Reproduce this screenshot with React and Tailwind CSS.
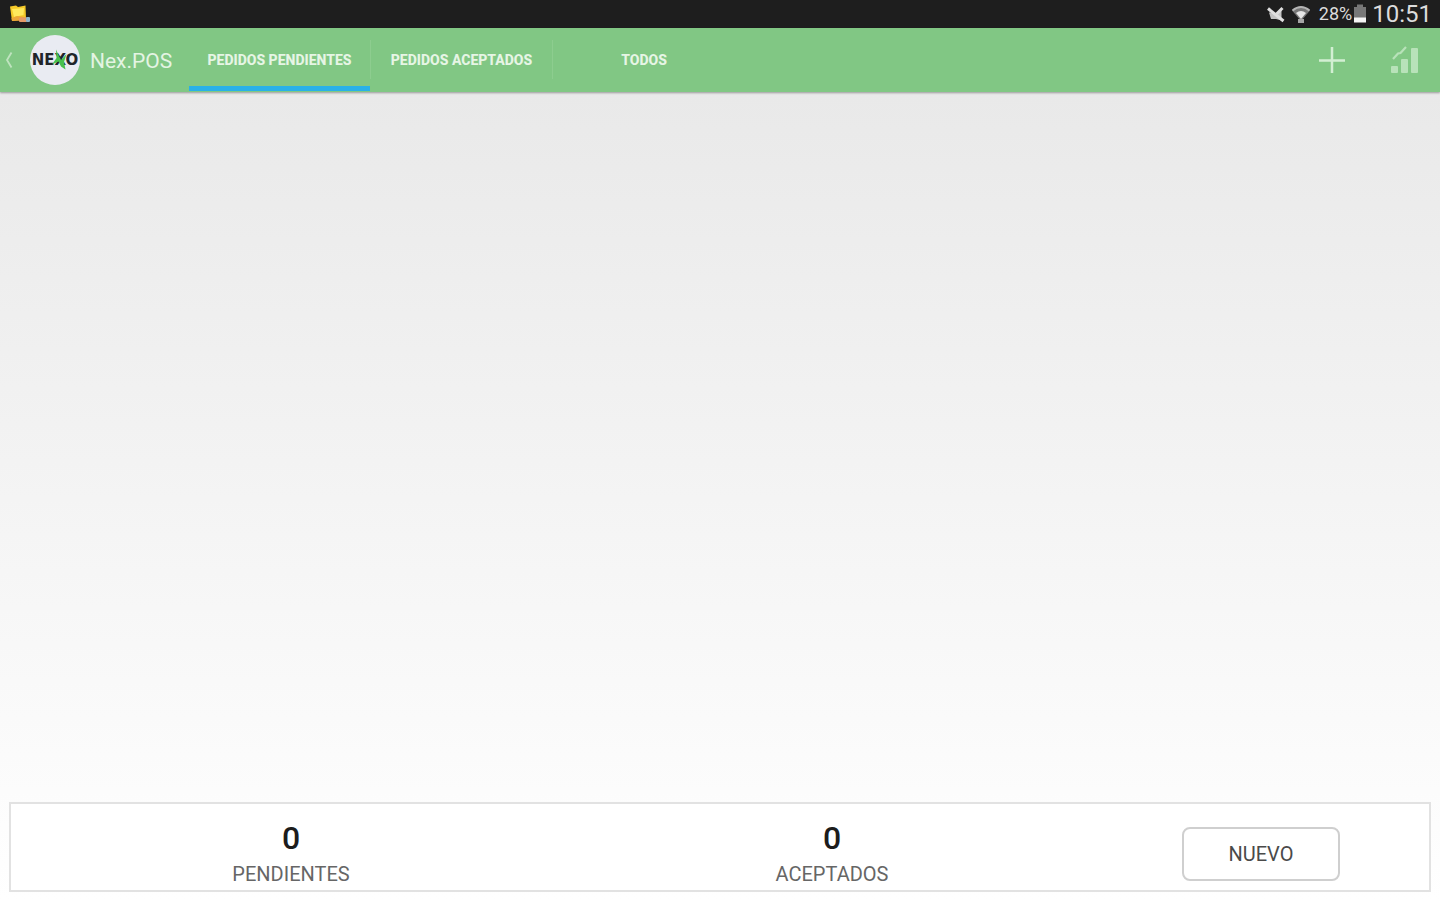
import { useState } from "react";

const TABS = ["PEDIDOS PENDIENTES", "PEDIDOS ACEPTADOS", "TODOS"];

function FolderIcon() {
  return (
    <svg className="h-5 w-6" viewBox="0 0 24 20" aria-hidden="true">
      <path d="M2 2.500 L8 1.500 L10 3 L17.500 1.500 L18 15 L4 17 Z" fill="#f5c928" />
      <path d="M4 5 L16 4 L15.500 11 L6 13 Z" fill="#ffe95c" />
      <path d="M3.500 14 L9 12 L17 13 L18 16.500 L4 17 Z" fill="#eda637" />
      <rect x="11" y="13.500" width="8" height="4.500" rx="1" fill="#e59a68" />
      <rect x="18" y="13" width="4" height="5" rx="1" fill="#8eb4cc" />
    </svg>
  );
}

function MutedIcon() {
  return (
    <svg className="h-5 w-5" viewBox="0 0 20 20" aria-hidden="true">
      <path d="M2 8.500 H6 L9 9.500 L14.500 4 V16.500 L9 15 H4 Z" fill="#c4c4c4" />
      <path d="M1 4.500 L16.500 17" stroke="#e0e0e0" strokeWidth="3" />
      <path d="M9.500 10 L15.500 4" stroke="#dedede" strokeWidth="3" />
    </svg>
  );
}

function WifiIcon() {
  return (
    <svg className="h-5 w-5" viewBox="0 0 20 20" aria-hidden="true">
      <path d="M1 6.500 Q10 -1 19 6.500 L10 17 Z" fill="#777777" />
      <path d="M1.500 6.500 Q10 -0.500 18.500 6.500" fill="none" stroke="#b5b5b5" strokeWidth="2" />
      <path d="M5 9 Q10 5 15 9 L10 15 Z" fill="#e6e6e6" />
      <rect x="7" y="15" width="6" height="4" fill="#a5a5a5" />
    </svg>
  );
}

function BatteryIcon() {
  return (
    <svg className="h-5 w-4" viewBox="0 0 16 20" aria-hidden="true">
      <path d="M5 0.500 H11 V3 H14 V18 H2 V3 H5 Z" fill="#777777" />
      <rect x="2" y="13.500" width="12" height="5" fill="#f4f4f4" />
    </svg>
  );
}

function StatusBar() {
  return (
    <div className="flex h-7 items-center justify-between bg-[#1e1e1e] pr-2 pl-2 text-[#dcdcdc]">
      <FolderIcon />
      <div className="flex items-center">
        <MutedIcon />
        <span className="w-1" />
        <WifiIcon />
        <span className="ml-2 text-lg leading-7">28%</span>
        <BatteryIcon />
        <span className="ml-1 text-2xl leading-7">10:51</span>
      </div>
    </div>
  );
}

function Logo() {
  return (
    <span className="relative flex h-[50px] w-[50px] shrink-0 items-center justify-center rounded-full bg-[#e9ebf2]">
      <span className="font-['DejaVu_Sans',sans-serif] text-[15px] leading-4 font-bold text-[#20242a]">
        NEXO
      </span>
      <svg className="absolute inset-0 h-full w-full" viewBox="0 0 50 50" aria-hidden="true">
        <path
          d="M26 14.500 L29 21 L31 25 L36.500 19 L34 27 L35.500 34.500 L31 31.500 L28.500 26.500 L22 29.500 L26.500 23 Z"
          fill="#48c04d"
        />
      </svg>
    </span>
  );
}

function Header() {
  const [active, setActive] = useState(0);
  return (
    <header className="relative flex h-16 bg-[#81c784] pb-px text-[#e6f5e5] shadow-[0_1px_2px_rgba(0,0,0,0.35)]">
      <a href="#inicio" className="flex w-[189px] shrink-0 items-center pl-1 text-[#e4f4e3]">
        <svg className="mr-4 h-5 w-[10px]" viewBox="0 0 10 20" aria-hidden="true">
          <path d="M7.500 2.500 L3 10 L7.500 17.500" fill="none" stroke="#bfe3bf" strokeWidth="1.800" />
        </svg>
        <Logo />
        <span className="ml-[10px] pt-[2px] text-[21px] leading-6">Nex.POS</span>
      </a>
      <nav className="flex">
        {TABS.map((tab, i) => (
          <button
            key={tab}
            type="button"
            aria-current={i === active ? "page" : undefined}
            onClick={() => setActive(i)}
            className="flex w-[182px] items-stretch"
          >
            <span
              className={
                "flex flex-1 items-center justify-center border-b-[5px] pt-[6px] text-sm leading-4 font-extrabold whitespace-nowrap " +
                (i === active ? "border-[#29b1e8]" : "border-transparent")
              }
            >
              {tab}
            </span>
            {i < TABS.length - 1 && <span className="my-3 w-px bg-[#8dcd8f]" />}
          </button>
        ))}
      </nav>
      <div className="ml-auto flex items-center gap-10 pt-px pr-5">
        <button type="button" aria-label="Agregar pedido">
          <svg className="h-9 w-9" viewBox="0 0 36 36" aria-hidden="true">
            <path d="M18 5 V31 M5 18.500 H31" stroke="#d3efd3" strokeWidth="2.500" />
          </svg>
        </button>
        <button type="button" aria-label="Estadísticas">
          <svg className="h-[30px] w-[30px]" viewBox="0 0 30 30" aria-hidden="true">
            <g fill="#b8e2b9">
              <rect x="1" y="21" width="7" height="7" rx="1" />
              <rect x="11" y="14" width="7" height="14" rx="1" />
              <rect x="21" y="3" width="7" height="25" rx="1" />
            </g>
            <path d="M3 14 L8 8.500 L10.500 8 L16 2" fill="none" stroke="#b8e2b9" strokeWidth="2.200" />
          </svg>
        </button>
      </div>
    </header>
  );
}

function Counter({ value, label }) {
  return (
    <div className="flex flex-col items-center pt-4">
      <span className="text-[32px] leading-9 font-medium text-[#1c1c1c]">{value}</span>
      <span className="text-xl leading-9 text-[#666666]">{label}</span>
    </div>
  );
}

export default function App() {
  return (
    <div className="flex min-h-screen flex-col bg-white font-[Roboto,sans-serif]">
      <StatusBar />
      <Header />
      <main className="flex flex-1 flex-col bg-linear-to-b from-[#e9e9e9] to-white">
        <div className="flex-1" />
        <section className="mx-[9px] mb-2 grid h-[90px] grid-cols-[560fr_522fr_336fr] border-2 border-[#e2e2e2] bg-white">
          <Counter value="0" label="PENDIENTES" />
          <Counter value="0" label="ACEPTADOS" />
          <div className="flex items-center justify-center pt-3">
            <button
              type="button"
              className="h-[54px] w-[158px] rounded-lg border-2 border-[#cfcfcf] bg-white text-xl leading-6 text-[#4a4a4a]"
            >
              NUEVO
            </button>
          </div>
        </section>
      </main>
    </div>
  );
}
